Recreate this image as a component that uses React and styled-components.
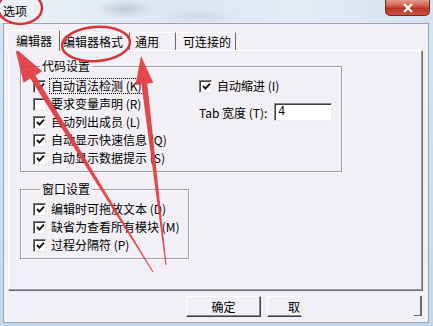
import styled, { createGlobalStyle } from "styled-components";

const Global = createGlobalStyle`
  body { margin: 0; background: #fff; }
  * { box-sizing: border-box; }
`;

const codeItems = [
  { label: "自动语法检测 (K)", on: true, focus: true },
  { label: "要求变量声明 (R)", on: false },
  { label: "自动列出成员 (L)", on: true },
  { label: "自动显示快速信息 (Q)", on: true },
  { label: "自动显示数据提示 (S)", on: true },
];

const windowItems = [
  { label: "编辑时可拖放文本 (D)", on: true },
  { label: "缺省为查看所有模块 (M)", on: true },
  { label: "过程分隔符 (P)", on: true },
];

const tabs = [
  { label: "编辑器", width: 53, pad: 8, active: true },
  { label: "编辑器格式", width: 70, pad: 3 },
  { label: "通用", width: 46, pad: 5 },
  { label: "可连接的", width: 60, pad: 7 },
];

function Check({ on }) {
  return (
    <Box>
      {on && (
        <svg width="9" height="9" viewBox="0 0 9 9">
          <path d="M1 4 L3.4 6.6 L8 1.6" fill="none" stroke="#111" strokeWidth="1.9" />
        </svg>
      )}
    </Box>
  );
}

function Option({ item }) {
  return (
    <Row>
      <Check on={item.on} />
      <Label $focus={item.focus}>{item.label}</Label>
    </Row>
  );
}

function App() {
  return (
    <>
      <Global />
      <Window>
        <TitleBar>
          <Title>选项</Title>
          <CloseBtn>
            <svg width="12" height="10" viewBox="0 0 12 10">
              <path d="M2 1 L10 9 M10 1 L2 9" stroke="#fff" strokeWidth="2.4" />
            </svg>
          </CloseBtn>
        </TitleBar>
        <Client>
          <TabRow>
            {tabs.map((t) => (
              <Tab key={t.label} $active={t.active} $w={t.width} $pad={t.pad}>
                {t.label}
              </Tab>
            ))}
          </TabRow>
          <Panel>
            <Group $w={322}>
              <Legend>代码设置</Legend>
              <Columns>
                <LeftCol>
                  {codeItems.map((it) => (
                    <Option key={it.label} item={it} />
                  ))}
                </LeftCol>
                <RightCol>
                  <Option item={{ label: "自动缩进 (I)", on: true }} />
                  <FieldRow>
                    <FieldLabel>Tab 宽度 (T):</FieldLabel>
                    <TextBox>4</TextBox>
                  </FieldRow>
                </RightCol>
              </Columns>
            </Group>
            <Group $w={169} $gap={11}>
              <Legend>窗口设置</Legend>
              {windowItems.map((it) => (
                <Option key={it.label} item={it} />
              ))}
            </Group>
          </Panel>
          <ButtonRow>
            <Button>确定</Button>
            <Button $cut>取</Button>
            <Grip />
          </ButtonRow>
        </Client>
        <Marks viewBox="0 0 433 326" width="433" height="326">
          <ellipse cx="20" cy="8" rx="22" ry="16" fill="none" stroke="#d9323a" strokeWidth="2.5" />
          <ellipse
            cx="96"
            cy="44"
            rx="34"
            ry="17"
            fill="none"
            stroke="#d9323a"
            strokeWidth="2.5"
            transform="rotate(-4 96 44)"
          />
          <polygon
            fill="#e23a40"
            opacity="0.92"
            points="15,48 42.2,71.2 35.4,75.4 153.4,271.7 152.6,272.3 30.3,78.6 23.5,82.8"
          />
          <polygon
            fill="#e23a40"
            opacity="0.92"
            points="141,56 153.3,82.7 147.3,83.4 166.5,264.9 165.5,265.1 141.4,84.2 135.4,84.9"
          />
        </Marks>
      </Window>
    </>
  );
}

export default App;

// styles

const Window = styled.div`
  position: relative;
  width: 433px;
  height: 326px;
  overflow: hidden;
  display: flex;
  flex-direction: column;
  background: linear-gradient(180deg, #d6e4f2, #c3d8ec);
  font-family: "Noto Sans CJK SC", sans-serif;
  font-size: 12px;
  color: #000;
`;

const TitleBar = styled.div`
  height: 23px;
  display: flex;
  justify-content: space-between;
  align-items: flex-start;
  background:
    radial-gradient(ellipse 30px 10px at 125px 9px, rgba(110, 120, 140, 0.28), transparent),
    radial-gradient(ellipse 40px 8px at 200px 16px, rgba(150, 160, 180, 0.2), transparent),
    linear-gradient(90deg, #eef2f7, #dce7f2 40%, #e4ecf5 70%, #d4e2f0);
`;

const Title = styled.div`
  padding: 3px 0 0 3px;
  line-height: 16px;
`;

const CloseBtn = styled.div`
  width: 45px;
  height: 16px;
  margin-right: 3px;
  border: 1px solid #6e2b24;
  border-top: none;
  border-radius: 0 0 5px 5px;
  background: linear-gradient(180deg, #e39a8e, #cf5444 45%, #b93424 55%, #c8513f);
  display: flex;
  align-items: center;
  justify-content: center;
`;

const Client = styled.div`
  flex: 1;
  margin: 0 4px 3px 3px;
  border: 1px solid #9aa6b4;
  background: #f3f0f5;
  padding: 6px 0 0 4px;
  display: flex;
  flex-direction: column;
`;

const TabRow = styled.div`
  display: flex;
  align-items: flex-end;
  height: 20px;
  margin-left: -1px;
`;

const Tab = styled.div`
  position: relative;
  z-index: ${(p) => (p.$active ? 1 : 0)};
  width: ${(p) => p.$w}px;
  height: ${(p) => (p.$active ? 21 : 18)}px;
  margin-bottom: ${(p) => (p.$active ? -1 : 0)}px;
  padding-left: ${(p) => p.$pad}px;
  line-height: ${(p) => (p.$active ? 20 : 18)}px;
  background: #f3f0f5;
  border-top: 1px solid #fff;
  border-left: ${(p) => (p.$active ? "1px solid #fff" : "none")};
  border-right: 1px solid #6a6a6a;
  white-space: nowrap;
`;

const Panel = styled.div`
  width: 415px;
  height: 241px;
  padding: 9px 0 0 11px;
  border-top: 1px solid #fff;
  border-left: 1px solid #fff;
  border-right: 1px solid #6a6a6a;
  border-bottom: 1px solid #6a6a6a;
  box-shadow: inset -1px -1px 0 #a09da3;
`;

const Group = styled.fieldset`
  width: ${(p) => p.$w}px;
  margin: ${(p) => p.$gap || 0}px 0 0 0;
  padding: 5px 0 4px 12px;
  border: 1px solid #a09da3;
  box-shadow: 1px 1px 0 #fff, inset 1px 1px 0 #fff;
  min-inline-size: 0;
`;

const Legend = styled.legend`
  margin-left: 7px;
  padding: 0 2px;
  line-height: 12px;
  font-size: 12px;
`;

const Columns = styled.div`
  display: flex;
`;

const LeftCol = styled.div`
  width: 166px;
`;

const RightCol = styled.div`
  display: flex;
  flex-direction: column;
`;

const Row = styled.div`
  height: 18px;
  display: flex;
  align-items: center;
  gap: 4px;
  white-space: nowrap;
`;

const Box = styled.span`
  width: 13px;
  height: 13px;
  flex: none;
  background: #fff;
  border: 1px solid;
  border-color: #7a7a7a #e8e8e8 #e8e8e8 #7a7a7a;
  box-shadow: inset 1px 1px 0 #404040;
  display: flex;
  align-items: center;
  justify-content: center;
  padding: 1px 0 0 1px;
`;

const Label = styled.span`
  line-height: 14px;
  padding: 0 1px;
  outline: ${(p) => (p.$focus ? "1px dotted #000" : "none")};
`;

const FieldRow = styled.div`
  margin-top: 8px;
  display: flex;
  align-items: center;
  gap: 2px;
`;

const FieldLabel = styled.span`
  width: 73px;
  white-space: nowrap;
`;

const TextBox = styled.div`
  width: 58px;
  height: 18px;
  background: #fff;
  border: 1px solid;
  border-color: #8a8a8a #ececec #ececec #8a8a8a;
  box-shadow: inset 1px 1px 0 #404040;
  padding-left: 3px;
  line-height: 16px;
  font-family: "Liberation Mono", monospace;
`;

const ButtonRow = styled.div`
  width: 415px;
  margin-top: 5px;
  padding-left: 178px;
  display: flex;
  gap: 6px;
`;

const Button = styled.div`
  width: ${(p) => (p.$cut ? 35 : 75)}px;
  height: 21px;
  display: flex;
  align-items: center;
  justify-content: ${(p) => (p.$cut ? "flex-end" : "center")};
  padding-right: ${(p) => (p.$cut ? 1 : 0)}px;
  border: 1px solid;
  border-color: #fff ${(p) => (p.$cut ? "transparent" : "#404040")} #404040 #fff;
  box-shadow: ${(p) => (p.$cut ? "inset 0 -1px 0 #8a8a8a" : "inset -1px -1px 0 #8a8a8a")};
`;

const Grip = styled.div`
  margin-left: auto;
  margin-right: 1px;
  width: 8px;
  height: 20px;
  border-right: 2px solid #6a6a6a;
  border-bottom: 1px solid #6a6a6a;
`;

const Marks = styled.svg`
  position: absolute;
  left: 0;
  top: 0;
  pointer-events: none;
`;
